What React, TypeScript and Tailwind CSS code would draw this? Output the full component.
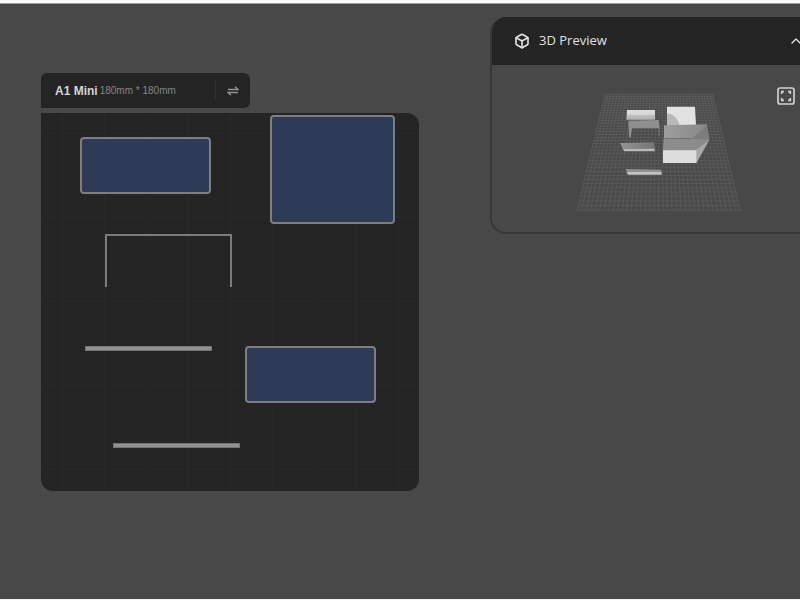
import { Box, ChevronUp } from "lucide-react";

const GRID_STEPS = 36;

const plates = [
  { id: "lid", className: "left-[39px] top-[24px] h-[57px] w-[131px]" },
  { id: "base", className: "left-[229px] top-[2px] h-[109px] w-[125px]" },
  { id: "tray", className: "left-[204px] top-[233px] h-[57px] w-[131px]" },
];

const strips = [
  { id: "strip-1", className: "left-[44px] top-[233px] w-[127px]" },
  { id: "strip-2", className: "left-[72px] top-[330px] w-[127px]" },
];

// Rows get wider towards the viewer, so their spacing is perspective correct.
function gridRow(step: number) {
  const far = 324;
  const near = 489;
  const width = 1 / (1 / far + (1 / near - 1 / far) * (step / GRID_STEPS));
  const t = (width - far) / (near - far);
  return { y: 28 + t * 348, x1: 105 - t * 84, x2: 429 + t * 81 };
}

function PreviewScene() {
  const steps = Array.from({ length: GRID_STEPS + 1 }, (_, i) => i);

  return (
    <svg viewBox="0 0 540 405" className="h-[135px] w-[180px]" aria-hidden="true">
      <defs>
        <linearGradient id="lidFace" x1="0" y1="0" x2="0" y2="1">
          <stop offset="0" stopColor="#dedede" />
          <stop offset="0.45" stopColor="#d6d6d6" />
          <stop offset="0.6" stopColor="#bcbcbc" />
          <stop offset="1" stopColor="#b2b2b2" />
        </linearGradient>
        <linearGradient id="sideFace" x1="0" y1="0" x2="1" y2="0">
          <stop offset="0" stopColor="#949494" />
          <stop offset="1" stopColor="#747474" />
        </linearGradient>
        <linearGradient id="slopeFace" x1="0" y1="0" x2="1" y2="0">
          <stop offset="0" stopColor="#9e9e9e" />
          <stop offset="1" stopColor="#868686" />
        </linearGradient>
      </defs>

      <polygon points="105,28 429,28 510,376 21,376" fill="#4a4a4a" />
      <g stroke="#686868" strokeWidth="2" strokeOpacity="0.7">
        {steps.map((i) => (
          <line
            key={`col-${i}`}
            x1={105 + (324 * i) / GRID_STEPS}
            y1={28}
            x2={21 + (489 * i) / GRID_STEPS}
            y2={376}
          />
        ))}
        {steps.map((i) => {
          const row = gridRow(i);
          return <line key={`row-${i}`} x1={row.x1} y1={row.y} x2={row.x2} y2={row.y} />;
        })}
      </g>

      <polygon points="171,75 255,75 255,104 169,104" fill="url(#lidFace)" />
      <polygon points="175,107 266,105 269,130 186,130 182,158 177,155" fill="#8f8f8f" />
      <polygon points="264,130 269,130 269,155 266,152" fill="#707070" />

      <polygon points="150,174 252,172 254,194 160,194" fill="url(#sideFace)" />
      <polygon points="159,192 254,191 254,199 162,199" fill="#b9b9b9" />

      <polygon points="167,252 274,254 274,262 171,262" fill="#919191" />
      <polygon points="170,261 275,261 275,269 174,269" fill="#c2c2c2" />

      <polygon points="291,65 375,65 378,122 291,122" fill="#e2e2e2" />
      <path d="M291 87 C307 84 324 99 329 122 L291 122 Z" fill="#b8b8b8" />
      <polygon points="282,121 411,118 418,164 282,161" fill="url(#slopeFace)" />
      <polygon points="411,119 418,164 366,161" fill="#7c7c7c" />
      <polygon points="281,160 418,164 379,234 279,196" fill="#959595" />
      <polygon points="285,165 417,165 379,196 279,196" fill="#8c8c8c" />
      <polygon points="417,166 379,234 375,197" fill="#a8a8a8" />
      <path d="M284 161 H364" stroke="#666666" strokeWidth="3" />
      <polygon points="279,196 379,196 379,234 279,234" fill="#dddddd" />
    </svg>
  );
}

function FitViewIcon() {
  return (
    <svg viewBox="0 0 18 18" className="size-[18px]" fill="none" stroke="currentColor">
      <rect x="1" y="1" width="16" height="16" rx="2" strokeWidth="1.7" />
      <path
        d="M4.7 7V4.7H7M11 4.7h2.3V7M13.3 11v2.3H11M7 13.3H4.7V11"
        strokeWidth="1.7"
      />
    </svg>
  );
}

function PrinterBar() {
  return (
    <div className="flex h-[35px] w-[209px] items-center rounded-md rounded-bl-none bg-[#242424] pl-3.5">
      <h1 className="text-[12px] font-bold text-[#d4d4d4]">A1 Mini</h1>
      <span className="ml-0.5 text-[10px] text-[#858585]">180mm * 180mm</span>
      <div className="ml-auto h-5 w-px bg-[#303030]" />
      <button
        type="button"
        aria-label="Switch printer"
        className="flex h-full w-[34px] items-center justify-center text-[#929292]"
      >
        <svg
          viewBox="0 0 12 10"
          className="h-2.5 w-3"
          fill="none"
          stroke="currentColor"
          strokeWidth="1.3"
        >
          <path d="M1 3.5h10L8 .8M11 6.5H1L4 9.2" />
        </svg>
      </button>
    </div>
  );
}

function BuildPlate() {
  return (
    <div className="relative mt-[5px] aspect-square overflow-hidden rounded-xl rounded-tl-none bg-[#242424] bg-[linear-gradient(to_right,#282828_1px,transparent_1px),linear-gradient(to_bottom,#282828_1px,transparent_1px)] bg-[size:42px_84px] bg-[position:21px_20px]">
      {plates.map((plate) => (
        <div
          key={plate.id}
          className={`absolute rounded border-2 border-[#7c7e7f] bg-[#2d3b56] ${plate.className}`}
        />
      ))}
      <div className="absolute left-[64px] top-[121px] h-[53px] w-[127px] border-2 border-b-0 border-[#7c7c7c]" />
      {strips.map((strip) => (
        <div
          key={strip.id}
          className={`absolute h-[5px] border border-[#747474] bg-[#929292] ${strip.className}`}
        />
      ))}
    </div>
  );
}

function PreviewPanel() {
  return (
    <aside className="-mr-[30px] mt-[13px] min-w-0 flex-1 overflow-hidden rounded-2xl border-2 border-t-0 border-[#373737]">
      <header className="flex h-12 items-center bg-[#242424] pl-[22px] pr-6 text-[#e0e0e0]">
        <Box className="size-4" strokeWidth={2.5} />
        <h2 className="ml-[9px] font-['Open_Sans',sans-serif] text-[13px]">3D Preview</h2>
        <button type="button" aria-label="Collapse preview" className="ml-auto">
          <ChevronUp className="size-4" />
        </button>
      </header>
      <div className="relative flex justify-center pb-3 pt-5">
        <PreviewScene />
        <button
          type="button"
          aria-label="Fit view"
          className="absolute right-[33px] top-[22px] text-[#d0d0d0]"
        >
          <FitViewIcon />
        </button>
      </div>
    </aside>
  );
}

export default function App() {
  return (
    <div className="flex min-h-screen flex-col overflow-hidden border-b border-b-[#f4f0f2] bg-[#484848] font-['Liberation_Sans',Arial,sans-serif]">
      <div className="h-1 border-b border-[#a0a0a0] bg-[#fafafa]" />
      <main className="flex flex-1 items-start gap-[71px] pl-[41px]">
        <section className="w-[378px] shrink-0 pt-[69px]">
          <PrinterBar />
          <BuildPlate />
        </section>
        <PreviewPanel />
      </main>
    </div>
  );
}
